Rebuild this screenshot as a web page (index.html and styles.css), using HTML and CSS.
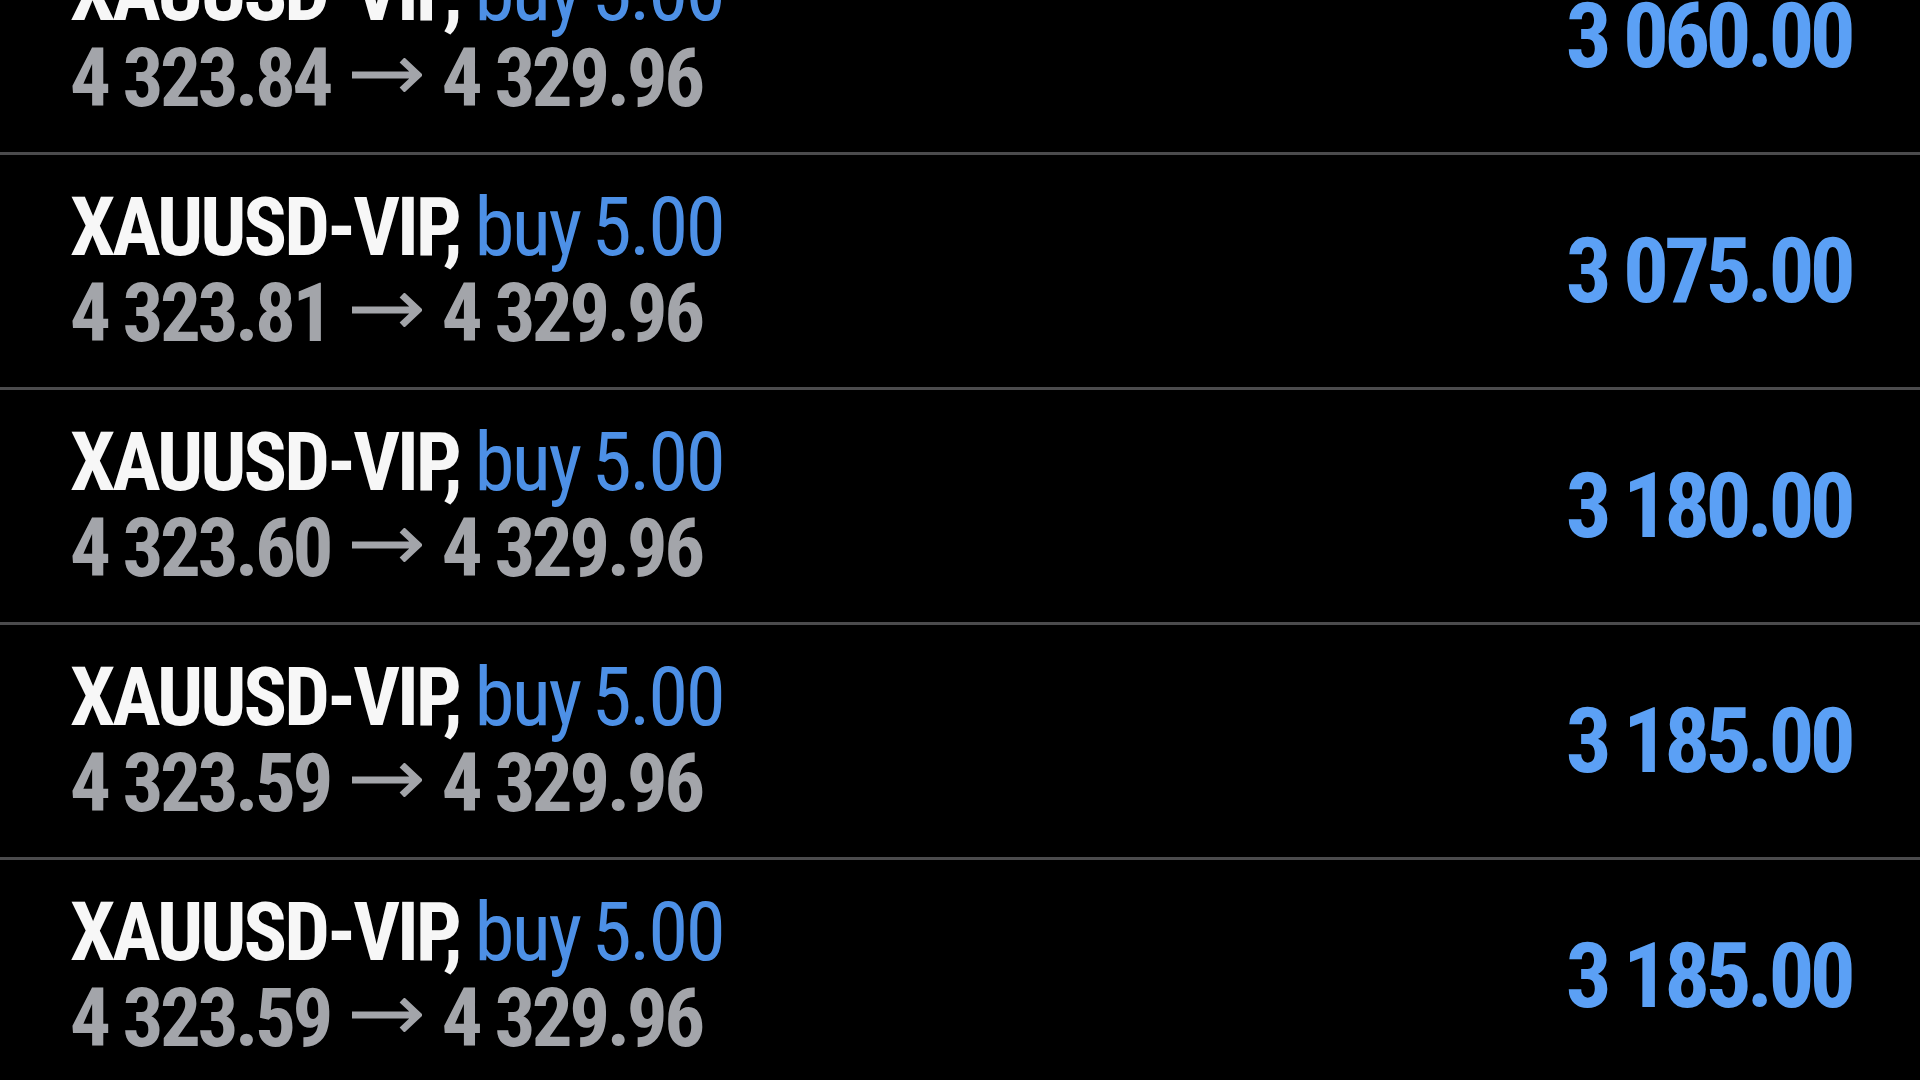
FILE: index.html
```html
<!DOCTYPE html>
<html lang="en">
<head>
    <meta charset="UTF-8">
    <meta name="viewport" content="width=device-width, initial-scale=1.0">
    <title>History</title>
    <link rel="stylesheet" href="styles.css">
</head>
<body>
    <div class="deals">
        <div class="deal">
            <div class="info">
                <div class="title"><span class="sym">XAUUSD-VIP,</span> <span class="side">buy 5.00</span></div>
                <div class="prices">4 323.84<svg class="arrow" viewBox="0 0 70 34"><path d="M0 17H66M50 2L66 17L50 32"/></svg>4 329.96</div>
            </div>
            <div class="profit">3 060.00</div>
        </div>
        <div class="deal">
            <div class="info">
                <div class="title"><span class="sym">XAUUSD-VIP,</span> <span class="side">buy 5.00</span></div>
                <div class="prices">4 323.81<svg class="arrow" viewBox="0 0 70 34"><path d="M0 17H66M50 2L66 17L50 32"/></svg>4 329.96</div>
            </div>
            <div class="profit">3 075.00</div>
        </div>
        <div class="deal">
            <div class="info">
                <div class="title"><span class="sym">XAUUSD-VIP,</span> <span class="side">buy 5.00</span></div>
                <div class="prices">4 323.60<svg class="arrow" viewBox="0 0 70 34"><path d="M0 17H66M50 2L66 17L50 32"/></svg>4 329.96</div>
            </div>
            <div class="profit">3 180.00</div>
        </div>
        <div class="deal">
            <div class="info">
                <div class="title"><span class="sym">XAUUSD-VIP,</span> <span class="side">buy 5.00</span></div>
                <div class="prices">4 323.59<svg class="arrow" viewBox="0 0 70 34"><path d="M0 17H66M50 2L66 17L50 32"/></svg>4 329.96</div>
            </div>
            <div class="profit">3 185.00</div>
        </div>
        <div class="deal">
            <div class="info">
                <div class="title"><span class="sym">XAUUSD-VIP,</span> <span class="side">buy 5.00</span></div>
                <div class="prices">4 323.59<svg class="arrow" viewBox="0 0 70 34"><path d="M0 17H66M50 2L66 17L50 32"/></svg>4 329.96</div>
            </div>
            <div class="profit">3 185.00</div>
        </div>
    </div>
</body>
</html>
```

FILE: styles.css
```css
html, body {
    margin: 0;
    padding: 0;
    background: #000;
    height: 100%;
    overflow: hidden;
}
body {
    font-family: "Roboto Condensed", Roboto, "Liberation Sans", sans-serif;
    font-stretch: condensed;
}
.deals {
    margin-top: -80px;
}
.deal {
    display: flex;
    align-items: center;
    justify-content: space-between;
    height: 232px;
    padding: 0 69px 0 70px;
    border-bottom: 3px solid #4b4b4d;
}
.title, .prices {
    font-size: 81px;
    line-height: 86px;
    white-space: nowrap;
}
.title {
    word-spacing: -4px;
}
.sym {
    color: #f7f7f7;
    font-weight: 700;
    letter-spacing: -3px;
}
.side {
    color: #4d90e6;
    letter-spacing: -2.5px;
}
.prices {
    color: #a3a5aa;
    font-weight: 700;
    letter-spacing: -3.5px;
}
.arrow {
    width: 70px;
    height: 34px;
    margin: 0 20px 0 22px;
    vertical-align: 14px;
    fill: none;
    stroke: #a3a5aa;
    stroke-width: 7;
}
.profit {
    color: #5ba0f5;
    font-size: 91px;
    font-weight: 700;
    letter-spacing: -4.75px;
    white-space: nowrap;
}
```
